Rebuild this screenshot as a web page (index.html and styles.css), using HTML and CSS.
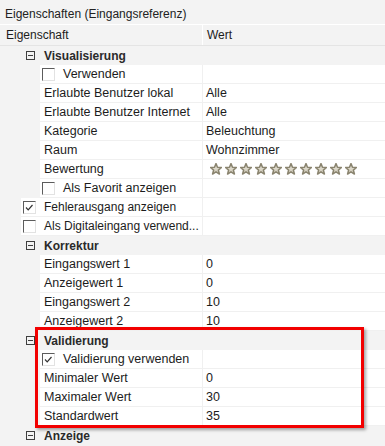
FILE: index.html
```html
<!DOCTYPE html>
<html lang="de">
<head>
    <meta charset="UTF-8">
    <title>Eigenschaften (Eingangsreferenz)</title>
    <link rel="stylesheet" href="styles.css">
</head>
<body>
<div class="panel">
    <div class="title">Eigenschaften (Eingangsreferenz)</div>
    <div class="header">
        <div class="col-name">Eigenschaft</div>
        <div class="col-value">Wert</div>
    </div>

    <svg width="0" height="0" class="defs">
        <defs>
            <linearGradient id="starFill" x1="0" y1="0" x2="0" y2="1">
                <stop offset="0" stop-color="#efece3"/>
                <stop offset="1" stop-color="#c9c3b0"/>
            </linearGradient>
            <symbol id="star" viewBox="0 0 11 11">
                <polygon points="5.5,0.6 6.85,3.94 10.5,4.16 7.69,6.51 8.62,10.1 5.5,8.1 2.38,10.1 3.31,6.51 0.5,4.16 4.15,3.94"
                         fill="url(#starFill)" stroke="#8a846f" stroke-width="1.4" stroke-linejoin="round"/>
            </symbol>
        </defs>
    </svg>

    <div class="rows">
        <!-- Visualisierung -->
        <div class="row cat"><span class="exp"></span><span class="cat-name">Visualisierung</span></div>
        <div class="row lvl1">
            <div class="gutter"></div>
            <div class="name"><span class="check"></span>Verwenden</div>
            <div class="value"></div>
        </div>
        <div class="row lvl1">
            <div class="gutter"></div>
            <div class="name">Erlaubte Benutzer lokal</div>
            <div class="value">Alle</div>
        </div>
        <div class="row lvl1">
            <div class="gutter"></div>
            <div class="name">Erlaubte Benutzer Internet</div>
            <div class="value">Alle</div>
        </div>
        <div class="row lvl1">
            <div class="gutter"></div>
            <div class="name">Kategorie</div>
            <div class="value">Beleuchtung</div>
        </div>
        <div class="row lvl1">
            <div class="gutter"></div>
            <div class="name">Raum</div>
            <div class="value">Wohnzimmer</div>
        </div>
        <div class="row lvl1">
            <div class="gutter"></div>
            <div class="name">Bewertung</div>
            <div class="value">
                <svg class="stars" width="147" height="12" viewBox="0 0 147 12">
                    <use href="#star" x="0" width="12" height="12"/>
                    <use href="#star" x="15" width="12" height="12"/>
                    <use href="#star" x="30" width="12" height="12"/>
                    <use href="#star" x="45" width="12" height="12"/>
                    <use href="#star" x="60" width="12" height="12"/>
                    <use href="#star" x="75" width="12" height="12"/>
                    <use href="#star" x="90" width="12" height="12"/>
                    <use href="#star" x="105" width="12" height="12"/>
                    <use href="#star" x="120" width="12" height="12"/>
                    <use href="#star" x="135" width="12" height="12"/>
                </svg>
            </div>
        </div>
        <div class="row lvl1">
            <div class="gutter"></div>
            <div class="name"><span class="check"></span>Als Favorit anzeigen</div>
            <div class="value"></div>
        </div>
        <div class="row lvl0">
            <div class="gutter"></div>
            <div class="name"><span class="check checked"><svg width="11" height="11" viewBox="0 0 11 11"><path d="M2 5.5 L4.2 7.8 L8.5 3" fill="none" stroke="#333" stroke-width="1.2"/></svg></span>Fehlerausgang anzeigen</div>
            <div class="value"></div>
        </div>
        <div class="row lvl0">
            <div class="gutter"></div>
            <div class="name"><span class="check"></span>Als Digitaleingang verwend...</div>
            <div class="value"></div>
        </div>

        <!-- Korrektur -->
        <div class="row cat"><span class="exp"></span><span class="cat-name">Korrektur</span></div>
        <div class="row lvl1">
            <div class="gutter"></div>
            <div class="name">Eingangswert 1</div>
            <div class="value">0</div>
        </div>
        <div class="row lvl1">
            <div class="gutter"></div>
            <div class="name">Anzeigewert 1</div>
            <div class="value">0</div>
        </div>
        <div class="row lvl1">
            <div class="gutter"></div>
            <div class="name">Eingangswert 2</div>
            <div class="value">10</div>
        </div>
        <div class="row lvl1">
            <div class="gutter"></div>
            <div class="name">Anzeigewert 2</div>
            <div class="value">10</div>
        </div>

        <!-- Validierung -->
        <div class="row cat"><span class="exp"></span><span class="cat-name">Validierung</span></div>
        <div class="row lvl1">
            <div class="gutter"></div>
            <div class="name"><span class="check checked"><svg width="11" height="11" viewBox="0 0 11 11"><path d="M2 5.5 L4.2 7.8 L8.5 3" fill="none" stroke="#333" stroke-width="1.2"/></svg></span>Validierung verwenden</div>
            <div class="value"></div>
        </div>
        <div class="row lvl1">
            <div class="gutter"></div>
            <div class="name">Minimaler Wert</div>
            <div class="value">0</div>
        </div>
        <div class="row lvl1">
            <div class="gutter"></div>
            <div class="name">Maximaler Wert</div>
            <div class="value">30</div>
        </div>
        <div class="row lvl1">
            <div class="gutter"></div>
            <div class="name">Standardwert</div>
            <div class="value">35</div>
        </div>

        <!-- Anzeige -->
        <div class="row cat"><span class="exp"></span><span class="cat-name">Anzeige</span></div>
    </div>

    <div class="highlight"></div>
</div>
</body>
</html>
```

FILE: styles.css
```css
body {
    margin: 0;
    background: #f3f3f3;
    font: normal 12px/1 "Liberation Sans", Arial, sans-serif;
    color: #1c1c1c;
}

.panel {
    position: relative;
    width: 385px;
    height: 446px;
    overflow: hidden;
}

.defs {
    position: absolute;
}

.title {
    height: 24px;
    box-sizing: border-box;
    padding: 7px 0 0 5px;
    line-height: 14px;
    color: #222;
}

.header {
    display: flex;
    height: 22px;
    box-sizing: border-box;
    border-top: 1px solid #ffffff;
    border-bottom: 1px solid #e4e4e4;
    line-height: 20px;
}

.header .col-name {
    width: 203px;
    box-sizing: border-box;
    padding-left: 6px;
    border-right: 1px solid #ffffff;
}

.header .col-value {
    padding-left: 4px;
}

.row {
    display: flex;
    height: 19px;
    line-height: 18px;
    font-size: 12.5px;
}

.row .gutter {
    flex: none;
}

.lvl0 {
    font-size: 12px;
}

.lvl0 .gutter {
    width: 21px;
}

.lvl1 .gutter {
    width: 40px;
}

.row .name {
    flex: none;
    display: flex;
    align-items: center;
    box-sizing: border-box;
    padding-left: 4px;
    background: #ffffff;
    border-right: 1px solid #f0f0f0;
    border-bottom: 1px solid #f0f0f0;
    white-space: nowrap;
    overflow: hidden;
}

.lvl0 .name {
    width: 182px;
    padding-left: 2px;
}

.lvl1 .name {
    width: 163px;
}

.lvl1 .name .check {
    margin-left: -2px;
}

.row .value {
    flex: 1;
    display: flex;
    align-items: center;
    box-sizing: border-box;
    padding-left: 3px;
    background: #ffffff;
    border-bottom: 1px solid #f0f0f0;
}

.stars {
    display: block;
    margin-left: 4px;
}

.check {
    flex: none;
    display: flex;
    align-items: center;
    justify-content: center;
    width: 13px;
    height: 13px;
    box-sizing: border-box;
    margin-right: 8px;
    border-top: 1px solid #5c5c5c;
    border-left: 1px solid #5c5c5c;
    border-right: 1px solid #e2e2e2;
    border-bottom: 1px solid #e2e2e2;
    background: #ffffff;
}

.check svg {
    display: block;
}

.cat {
    align-items: center;
    padding-left: 26px;
}

.exp {
    display: flex;
    align-items: center;
    justify-content: center;
    width: 9px;
    height: 9px;
    box-sizing: border-box;
    border: 1px solid #3f3f3f;
    margin-right: 9px;
}

.exp::after {
    content: "";
    width: 5px;
    height: 1px;
    background: #3f3f3f;
}

.cat-name {
    font-weight: bold;
    font-size: 12px;
    color: #2a2a2a;
}

.highlight {
    position: absolute;
    left: 35px;
    top: 327px;
    width: 329px;
    height: 101px;
    box-sizing: border-box;
    border: 3px solid #f20000;
    box-shadow: 2px 2px 3px rgba(0, 0, 0, .35);
}
```
